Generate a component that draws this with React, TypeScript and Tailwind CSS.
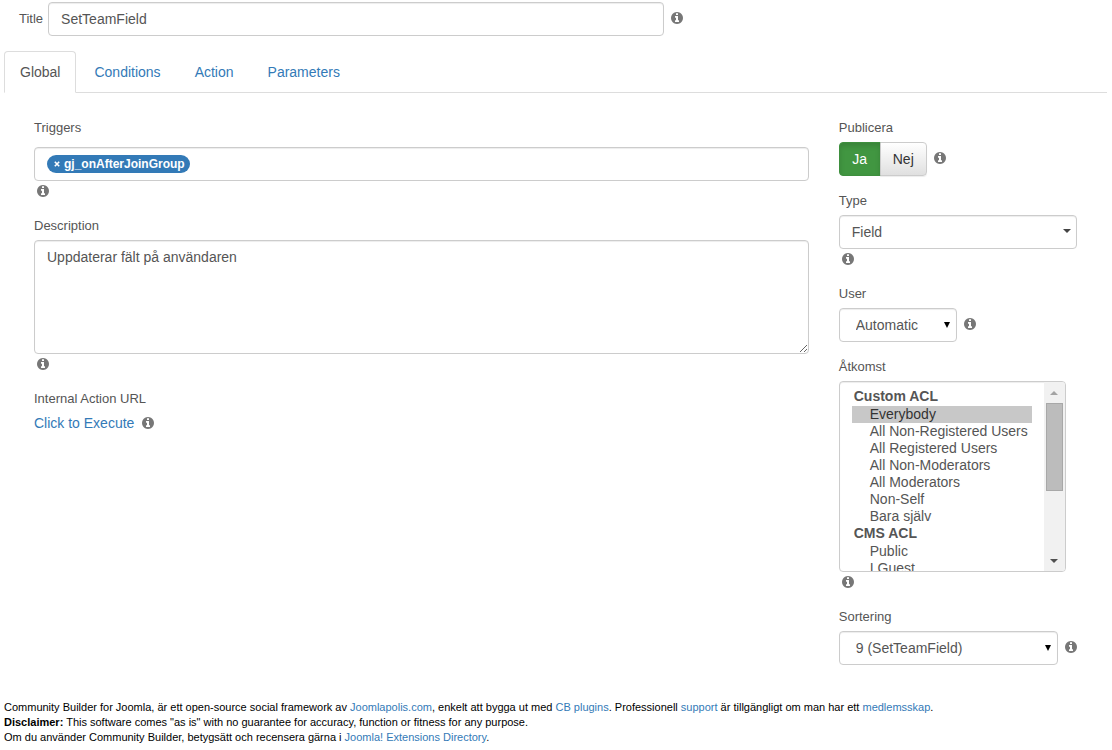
import React, { useState } from 'react';

const TABS = ['Global', 'Conditions', 'Action', 'Parameters'];

const ACCESS_GROUPS = [
  {
    label: 'Custom ACL',
    options: [
      'Everybody',
      'All Non-Registered Users',
      'All Registered Users',
      'All Non-Moderators',
      'All Moderators',
      'Non-Self',
      'Bara själv',
    ],
  },
  { label: 'CMS ACL', options: ['Public', 'I Guest', 'I Manager', 'I Registered'] },
];

const controlClass =
  'border border-[#ccc] rounded bg-white text-sm text-[#555] shadow-[inset_0_1px_1px_rgba(0,0,0,0.075)] outline-none focus:border-[#66afe9]';

function Info({ className = '' }: { className?: string }) {
  return (
    <svg viewBox="128 128 1536 1536" aria-hidden="true" className={`size-3 shrink-0 fill-[#777] ${className}`}>
      <path d="M1152 1376v-160q0-14-9-23t-23-9h-96v-512q0-14-9-23t-23-9h-320q-14 0-23 9t-9 23v160q0 14 9 23t23 9h96v320h-96q-14 0-23 9t-9 23v160q0 14 9 23t23 9h448q14 0 23-9t9-23zm-128-896v-160q0-14-9-23t-23-9h-192q-14 0-23 9t-9 23v160q0 14 9 23t23 9h192q14 0 23-9t9-23zm640 416q0 209-103 385.5t-279.5 279.5-385.5 103-385.5-103-279.5-279.5-103-385.5 103-385.5 279.5-279.5 385.5-103 385.5 103 279.5 279.5 103 385.5z" />
    </svg>
  );
}

function HelpRow() {
  return (
    <div className="flex h-5 items-center pl-[3px]">
      <Info />
    </div>
  );
}

interface FieldProps {
  label: string;
  htmlFor?: string;
  children: React.ReactNode;
}

function Field({ label, htmlFor, children }: FieldProps) {
  return (
    <div className="mb-[15px]">
      <label htmlFor={htmlFor} className="mb-1 block text-[13px] leading-5">
        {label}
      </label>
      {children}
    </div>
  );
}

interface DropdownProps {
  id: string;
  options: string[];
  className: string;
  selectClass: string;
  caret?: boolean;
}

function Dropdown({ id, options, className, selectClass, caret }: DropdownProps) {
  return (
    <div className={`relative ${className}`}>
      <select id={id} className={`${controlClass} h-[34px] w-full appearance-none ${selectClass}`}>
        {options.map((opt) => (
          <option key={opt}>{opt}</option>
        ))}
      </select>
      {caret ? (
        <svg viewBox="0 0 8 4" className="pointer-events-none absolute top-3.5 right-1.5 h-1 w-2 fill-[#444]">
          <path d="M0 0h8L4 4z" />
        </svg>
      ) : (
        <svg viewBox="0 0 6 6" className="pointer-events-none absolute top-3.5 right-[7px] size-1.5 fill-black">
          <path d="M0 0h6L3 6z" />
        </svg>
      )}
    </div>
  );
}

function ScrollBar() {
  return (
    <div aria-hidden="true" className="flex w-[21px] shrink-0 flex-col items-center bg-[#f1f1f1]">
      <div className="flex h-[21px] items-center">
        <svg viewBox="0 0 8 4" className="h-1 w-2 fill-[#a3a3a3]">
          <path d="M0 4h8L4 0z" />
        </svg>
      </div>
      <div className="h-[88px] w-[17px] border border-[#a8a8a8] bg-[#bcbcbc]" />
      <div className="mt-auto flex h-[21px] items-center">
        <svg viewBox="0 0 8 4" className="h-1 w-2 fill-[#505050]">
          <path d="M0 0h8L4 4z" />
        </svg>
      </div>
    </div>
  );
}

function Link({ children }: { children: React.ReactNode }) {
  return (
    <a href="#" className="text-[#337ab7] hover:underline">
      {children}
    </a>
  );
}

export default function App() {
  const [tab, setTab] = useState('Global');
  const [published, setPublished] = useState(true);
  const [triggers, setTriggers] = useState(['gj_onAfterJoinGroup']);

  return (
    <div className="bg-white pt-0.5 pr-[5px] pl-1 font-['Liberation_Sans',Arial,sans-serif] text-sm text-[#555]">
      <div className="flex items-center pl-[15px]">
        <label htmlFor="title" className="mr-[5px] text-[13px] leading-5">
          Title
        </label>
        <input id="title" defaultValue="SetTeamField" className={`${controlClass} h-[34px] w-full max-w-[616px] px-3`} />
        <Info className="mb-0.5 ml-[7px]" />
      </div>

      <div role="tablist" className="mt-[15px] flex gap-0.5 border-b border-[#ddd]">
        {TABS.map((name) => (
          <button
            key={name}
            role="tab"
            type="button"
            aria-selected={tab === name}
            onClick={() => setTab(name)}
            className={`-mb-px rounded-t border px-[15px] py-2.5 leading-5 ${
              tab === name
                ? 'border-[#ddd] border-b-white bg-white text-[#555]'
                : 'border-transparent text-[#337ab7] hover:text-[#23527c]'
            }`}
          >
            {name}
          </button>
        ))}
      </div>

      <div className="grid grid-cols-4 gap-[30px] px-[30px] pt-[25px]">
        <div className="col-span-3">
          <Field label="Triggers" htmlFor="triggers">
            <div className={`${controlClass} mt-[9px] flex h-[34px] items-center px-3`}>
              {triggers.map((name) => (
                <span
                  key={name}
                  className="flex h-[18px] items-center gap-1 rounded-full bg-[#337ab7] pr-[5px] pl-[7px] text-xs font-bold text-white"
                >
                  <button
                    type="button"
                    aria-label={`Remove ${name}`}
                    onClick={() => setTriggers(triggers.filter((t) => t !== name))}
                  >
                    <svg viewBox="0 0 6 6" className="size-1.5 stroke-white stroke-[1.6]">
                      <path d="M.8.8l4.4 4.4M5.2.8L.8 5.2" />
                    </svg>
                  </button>
                  {name}
                </span>
              ))}
              <input id="triggers" className="ml-1 min-w-0 flex-1 outline-none" />
            </div>
            <HelpRow />
          </Field>

          <Field label="Description" htmlFor="description">
            <textarea
              id="description"
              defaultValue="Uppdaterar fält på användaren"
              className={`${controlClass} block h-[114px] w-full resize-y px-3 py-1.5 leading-5`}
            />
            <HelpRow />
          </Field>

          <Field label="Internal Action URL">
            <div className="flex items-center leading-5">
              <Link>Click to Execute</Link>
              <Info className="ml-2" />
            </div>
          </Field>
        </div>

        <div>
          <Field label="Publicera">
            <div className="flex items-center">
              <button
                type="button"
                aria-pressed={published}
                onClick={() => setPublished(true)}
                className={`h-[34px] w-[42px] rounded-l border ${
                  published
                    ? 'border-[#3e8f3e] bg-[#419641] text-white shadow-[inset_0_3px_5px_rgba(0,0,0,0.125)]'
                    : 'border-[#ccc] bg-linear-to-b from-white to-[#e0e0e0] text-[#333]'
                }`}
              >
                Ja
              </button>
              <button
                type="button"
                aria-pressed={!published}
                onClick={() => setPublished(false)}
                className={`-ml-px h-[34px] w-[47px] rounded-r border ${
                  published
                    ? 'border-[#ccc] bg-linear-to-b from-white to-[#e0e0e0] text-[#333] shadow-[0_1px_1px_rgba(0,0,0,0.075)]'
                    : 'border-[#b92c28] bg-[#c12e2a] text-white'
                }`}
              >
                Nej
              </button>
              <Info className="mb-0.5 ml-[7px]" />
            </div>
          </Field>

          <Field label="Type" htmlFor="type">
            <Dropdown id="type" options={['Field']} className="w-full" selectClass="px-3" caret />
            <HelpRow />
          </Field>

          <Field label="User" htmlFor="user">
            <div className="flex items-center">
              <Dropdown id="user" options={['Automatic']} className="w-[118px]" selectClass="px-4" />
              <Info className="mb-0.5 ml-[7px]" />
            </div>
          </Field>

          <Field label="Åtkomst" htmlFor="access">
            <div className={`${controlClass} flex h-[191px] w-[227px] overflow-hidden`}>
              <select
                id="access"
                multiple
                defaultValue={['Everybody']}
                className="h-full min-w-0 flex-1 px-3 py-1.5 outline-none [scrollbar-width:none]"
              >
                {ACCESS_GROUPS.map((group) => (
                  <optgroup key={group.label} label={group.label} className="font-bold">
                    {group.options.map((opt) => (
                      <option
                        key={opt}
                        className="h-[17px] min-h-0 py-0 pr-0 pl-[18px] font-normal leading-[17px] checked:bg-[#c8c8c8] checked:[-webkit-text-fill-color:#333]"
                      >
                        {opt}
                      </option>
                    ))}
                  </optgroup>
                ))}
              </select>
              <ScrollBar />
            </div>
            <HelpRow />
          </Field>

          <Field label="Sortering" htmlFor="ordering">
            <div className="flex items-center">
              <Dropdown id="ordering" options={['9 (SetTeamField)']} className="w-[219px]" selectClass="px-4" />
              <Info className="mb-0.5 ml-[7px]" />
            </div>
          </Field>
        </div>
      </div>

      <footer className="mt-5 text-[11px] leading-[15px] text-black">
        <p>
          Community Builder for Joomla, är ett open-source social framework av <Link>Joomlapolis.com</Link>, enkelt att
          bygga ut med <Link>CB plugins</Link>. Professionell <Link>support</Link> är tillgängligt om man har ett{' '}
          <Link>medlemsskap</Link>.
        </p>
        <p>
          <strong>Disclaimer:</strong> This software comes "as is" with no guarantee for accuracy, function or fitness
          for any purpose.
        </p>
        <p>
          Om du använder Community Builder, betygsätt och recensera gärna i <Link>Joomla! Extensions Directory</Link>.
        </p>
      </footer>
    </div>
  );
}
